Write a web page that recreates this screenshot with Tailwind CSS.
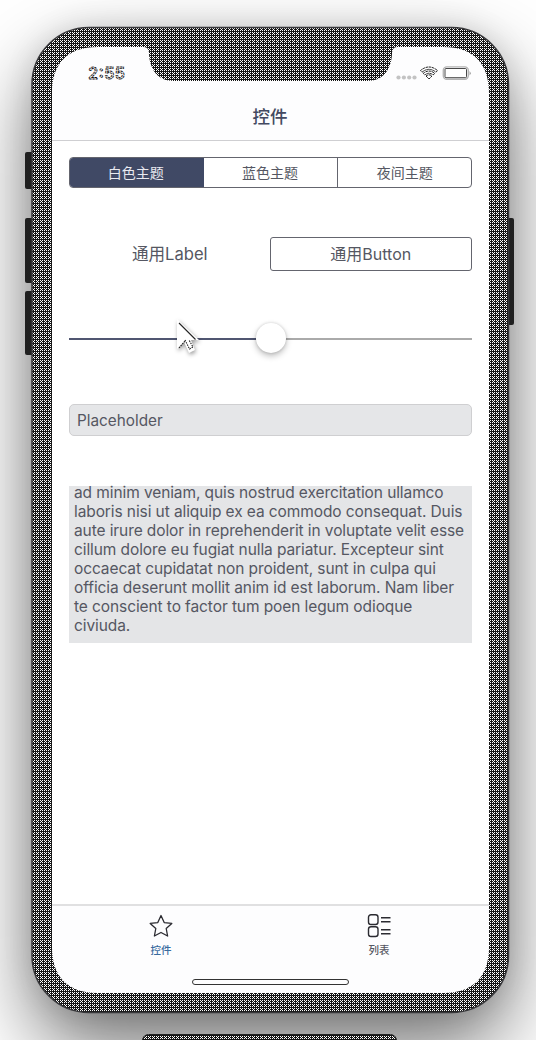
<!DOCTYPE html>
<html lang="zh-CN">
<head>
<meta charset="utf-8">
<title>控件</title>
<script src="https://cdn.jsdelivr.net/npm/@tailwindcss/browser@4"></script>
</head>
<body class="bg-white">
<div class="relative w-[536px] h-[1040px] overflow-hidden bg-white pt-[47px] pl-[52px] font-['Inter','Noto_Sans_CJK_SC',sans-serif] text-[#555762]">
  <div class="absolute left-[32px] top-[27px] w-[477px] h-[986px] rounded-[58px] shadow-[0_36px_80px_rgba(0,0,0,0.54),0_0_30px_rgba(0,0,0,0.12)]"></div>
  <svg class="absolute left-0 top-0" width="536" height="1040" viewBox="0 0 536 1040">
    <defs>
      <pattern id="mesh" width="4" height="4" patternUnits="userSpaceOnUse">
        <rect width="4" height="4" fill="#161616"/>
        <path shape-rendering="crispEdges" fill="#fff" d="M0 0h1v1h-1zM2 0h1v1h-1zM1 1h1v1h-1zM0 2h1v1h-1zM2 2h1v1h-1z"/>
      </pattern>
    </defs>
    <g fill="#202020">
      <rect x="25" y="152" width="9" height="37" rx="2"/>
      <rect x="25" y="218" width="9" height="65" rx="2"/>
      <rect x="25" y="291" width="9" height="64" rx="2"/>
      <rect x="505" y="218" width="9" height="107" rx="2"/>
    </g>
    <rect x="32" y="27.500" width="476.500" height="985" rx="57" fill="url(#mesh)" stroke="#37373a" stroke-width="1.500"/>
    <path d="M98 47H144Q149 47 149 54C150 70 158 81 174 81H367C383 81 391 70 392 54Q392 47 397 47H443C474 47 489 64 489 93V947C489 976 474 993 443 993H98C67 993 52 976 52 947V93C52 64 67 47 98 47Z" fill="#fdfdfe"/>
    <rect x="52" y="141" width="437" height="764" fill="#fff"/>
    <rect x="142.500" y="1034.500" width="254" height="20" rx="6" fill="url(#mesh)" stroke="#222"/>
  </svg>

  <main class="relative w-[437px] h-[946px] flex flex-col">
    <div class="h-[46px] shrink-0 flex justify-between pt-[17px] pl-[36px] pr-[18px]">
      <svg width="40" height="20" viewBox="0 0 40 20"><text x="0" y="15" font-size="16.500" font-weight="500" textLength="37" fill="#fff" stroke="#111" stroke-width=".9" stroke-dasharray="2.500 .7">2:55</text></svg>
      <svg width="76" height="20" viewBox="0 0 76 20" fill="none">
        <g fill="#c3c3c3"><circle cx="3.500" cy="13.500" r="2.100"/><circle cx="8.900" cy="13.500" r="2.100"/><circle cx="14.200" cy="13.500" r="2.100"/><circle cx="19.500" cy="13.500" r="2.100"/></g>
        <g stroke="#222" stroke-width="1"><path d="M25.500 6.500Q34 -.5 42.500 6.500L41 8.200Q34 2.500 27 8.200ZM28.300 9.300Q34 4.800 39.700 9.300L38.200 11Q34 7.500 29.800 11ZM31 12Q34 9.700 37 12L34 15Z" stroke-dasharray="2.500 .6"/></g>
        <rect x="48.300" y="2.900" width="25" height="12.400" rx="3.500" stroke="#b4b4b4" stroke-width="1.400"/>
        <rect x="50" y="4.500" width="21.500" height="9.200" rx="1" fill="#fff" stroke="#333" stroke-width=".9"/>
        <path d="M74.600 7v4.500q2-2.200 0-4.500z" fill="#888"/>
      </svg>
    </div>
    <h1 class="h-[48px] shrink-0 border-b border-[#cfcfd2] flex items-center justify-center pt-px pr-px text-[17.500px] font-medium text-[#434961]">控件</h1>

    <div class="mt-[16px] mx-[17px] h-[31px] shrink-0 grid grid-cols-3 border border-[#64656e] rounded-[4px] overflow-hidden text-[14px] text-center leading-[29px]">
      <span class="bg-[#404965] text-[#e9eaf0] pr-[2px]">白色主题</span>
      <span class="pr-px">蓝色主题</span>
      <span class="border-l border-[#64656e]">夜间主题</span>
    </div>

    <div class="mt-[49px] mx-[17px] h-[34px] shrink-0 grid grid-cols-2 text-[16px] text-center">
      <span class="leading-[34px] text-[16.600px]">通用Label</span>
      <button class="-ml-px border border-[#64656e] rounded-[3px] leading-[32px]">通用Button</button>
    </div>

    <div class="mt-[52px] mx-[17px] h-[31px] shrink-0 flex items-center">
      <span class="h-[2px] w-[187px] bg-[#505671]"></span>
      <span class="size-[30px] rounded-full bg-white shadow-[0_3px_6px_rgba(0,0,0,0.26),0_0_3px_rgba(0,0,0,0.16)] -translate-y-[1px]"></span>
      <span class="h-[2px] flex-1 bg-[#aaa]"></span>
    </div>
    <svg class="absolute left-[121px] top-[268px] drop-shadow-[1px_2px_2px_rgba(0,0,0,0.4)]" width="30" height="42" viewBox="0 0 30 42">
      <path d="M4 4V34L11 27L16 38L22 35L18 25H26Z" fill="#fff"/>
      <path d="M6 8L22.500 24.500" fill="none" stroke="#222" stroke-width="1.100"/>
      <path d="M6 33L12 26M12 25L16.500 34L20 32L16 25" fill="none" stroke="#222" stroke-width="1.100" stroke-dasharray="1.500 1"/>
    </svg>

    <div class="mt-[50px] mx-[17px] h-[32px] shrink-0 border border-[#cfcfd1] rounded-[5px] bg-[#e5e6e8] px-[7px] text-[15.300px] leading-[31px]">Placeholder</div>

    <div class="mt-[50px] mx-[17px] h-[157px] shrink-0 bg-[#e4e5e7] px-[5px]">
      <p class="-translate-y-[2px] text-[15.500px] leading-[18.950px] tracking-[-0.095px] whitespace-nowrap">ad minim veniam, quis nostrud exercitation ullamco<br>laboris nisi ut aliquip ex ea commodo consequat. Duis<br>aute irure dolor in reprehenderit in voluptate velit esse<br>cillum dolore eu fugiat nulla pariatur. Excepteur sint<br>occaecat cupidatat non proident, sunt in culpa qui<br>officia deserunt mollit anim id est laborum. Nam liber<br>te conscient to factor tum poen legum odioque<br>civiuda.</p>
    </div>

    <nav class="mt-auto h-[89px] shrink-0 border-t-2 border-[#e0e0e1] flex flex-col items-center text-[10.500px] font-medium">
      <div class="grid grid-cols-2 w-full pr-px">
        <div class="flex flex-col items-center pt-[7px] text-[#396b9e]">
          <svg width="26" height="26" viewBox="0 0 26 26" fill="none" stroke="#2b2b31" stroke-width="1.300" stroke-linejoin="round"><path d="M13 2.500L16.200 9.600L23.800 10.400L18.200 15.500L19.600 23L13 19.500L6.400 23L7.800 15.500L2.200 10.400L9.800 9.600Z"/></svg>
          <span class="leading-[18px] mt-[3px]">控件</span>
        </div>
        <div class="flex flex-col items-center pt-[7px]">
          <svg width="26" height="26" viewBox="0 0 26 26" fill="none" stroke="#2b2b31" stroke-width="1.400"><rect x="2.500" y="1.700" width="9.500" height="9.800" rx="2.500"/><rect x="2.500" y="13.700" width="9.500" height="9.800" rx="2.500"/><path d="M15 4.700h9.500M15 8.700h9.500M15 16.700h9.500M15 20.700h9.500"/></svg>
          <span class="leading-[18px] mt-[3px]">列表</span>
        </div>
      </div>
      <div class="mt-auto mb-[8px] w-[157px] h-[6px] border border-[#333] rounded-full"></div>
    </nav>
  </main>
</div>
</body>
</html>
